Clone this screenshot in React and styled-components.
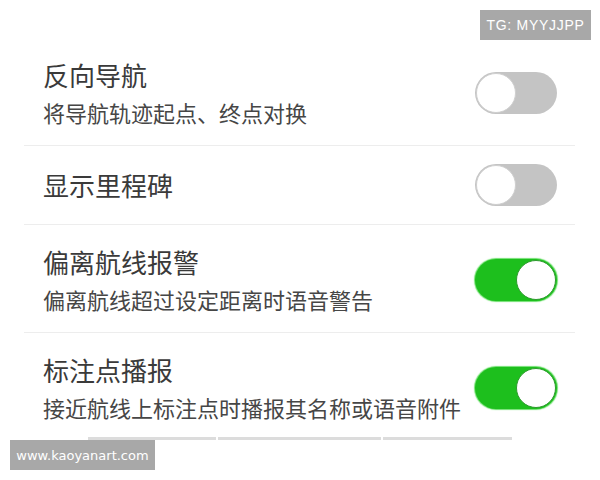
import React from 'react';
import styled, { createGlobalStyle } from 'styled-components';

const GlobalStyle = createGlobalStyle`
    * { box-sizing: border-box; }
    html, body {
        margin: 0;
        padding: 0;
        background: #FFFFFF;
        font-family: "Noto Sans CJK SC", "Noto Sans", sans-serif;
    }
`;

const Screen = styled.div`
    width: 600px;
    height: 480px;
    position: relative;
    overflow: hidden;
    background: #FFFFFF;
    padding-top: 38px;
`;

const SettingsList = styled.ul`
    list-style: none;
    margin: 0 25px 0 24px;
    padding: 0;
`;

const SettingRow = styled.li`
    display: flex;
    align-items: center;
    justify-content: space-between;
    padding: ${({ $single }) => ($single ? '18px 18px 18px 19px' : '18px 18px 15px 19px')};
    border-bottom: 1px solid #EDEDED;

    &:last-child {
        border-bottom: none;
        padding-bottom: 0;
    }
`;

const TextBlock = styled.div`
    display: flex;
    flex-direction: column;
`;

const Title = styled.span`
    font-size: 26px;
    line-height: 38px;
    color: #3A3A3A;
`;

const Subtitle = styled.span`
    font-size: 22px;
    line-height: 36px;
    color: #464646;
`;

const Track = styled.span`
    display: block;
    position: relative;
    width: 82px;
    height: 42px;
    border-radius: 21px;
    flex-shrink: 0;
    background: ${({ $on }) => ($on ? '#1DBF1D' : '#C4C4C4')};
    box-shadow: ${({ $on }) => ($on ? '0 0 1px 1px #6FE06F' : 'none')};
`;

const Knob = styled.span`
    position: absolute;
    top: 1px;
    left: ${({ $on }) => ($on ? '41px' : '1px')};
    width: 40px;
    height: 40px;
    border-radius: 50%;
    background: #FFFFFF;
    border: 1.5px solid ${({ $on }) => ($on ? '#2E9A2E' : '#CFCFCF')};
`;

const TabStrip = styled.div`
    display: flex;
    gap: 2px;
    margin: 12px 0 0 88px;
`;

const TabSegment = styled.span`
    display: block;
    width: ${({ $w }) => $w}px;
    height: 3px;
    background: #DCDCDC;
`;

const Watermark = styled.div`
    position: absolute;
    background: #A8A8A8;
    color: #FFFFFF;
    display: flex;
    align-items: center;
    justify-content: center;
    ${({ $top }) =>
        $top
            ? 'top: 10px; left: 480px; width: 111px; height: 30px; font-family: "Liberation Sans", sans-serif; font-size: 14px; letter-spacing: 0.7px;'
            : 'top: 440px; left: 10px; width: 145px; height: 30px; font-family: "DejaVu Sans", sans-serif; font-size: 13px;'}
`;

const Toggle = ({ on }) => (
    <Track $on={on}>
        <Knob $on={on} />
    </Track>
);

const settings = [
    { title: '反向导航', sub: '将导航轨迹起点、终点对换', on: false },
    { title: '显示里程碑', on: false },
    { title: '偏离航线报警', sub: '偏离航线超过设定距离时语音警告', on: true },
    { title: '标注点播报', sub: '接近航线上标注点时播报其名称或语音附件', on: true },
];

export default function App() {
    return (
        <Screen>
            <GlobalStyle />
            <SettingsList>
                {settings.map((s) => (
                    <SettingRow key={s.title} $single={!s.sub}>
                        <TextBlock>
                            <Title>{s.title}</Title>
                            {s.sub && <Subtitle>{s.sub}</Subtitle>}
                        </TextBlock>
                        <Toggle on={s.on} />
                    </SettingRow>
                ))}
            </SettingsList>
            <TabStrip>
                <TabSegment $w={128} />
                <TabSegment $w={163} />
                <TabSegment $w={129} />
            </TabStrip>
            <Watermark $top>TG: MYYJJPP</Watermark>
            <Watermark>www.kaoyanart.com</Watermark>
        </Screen>
    );
}
